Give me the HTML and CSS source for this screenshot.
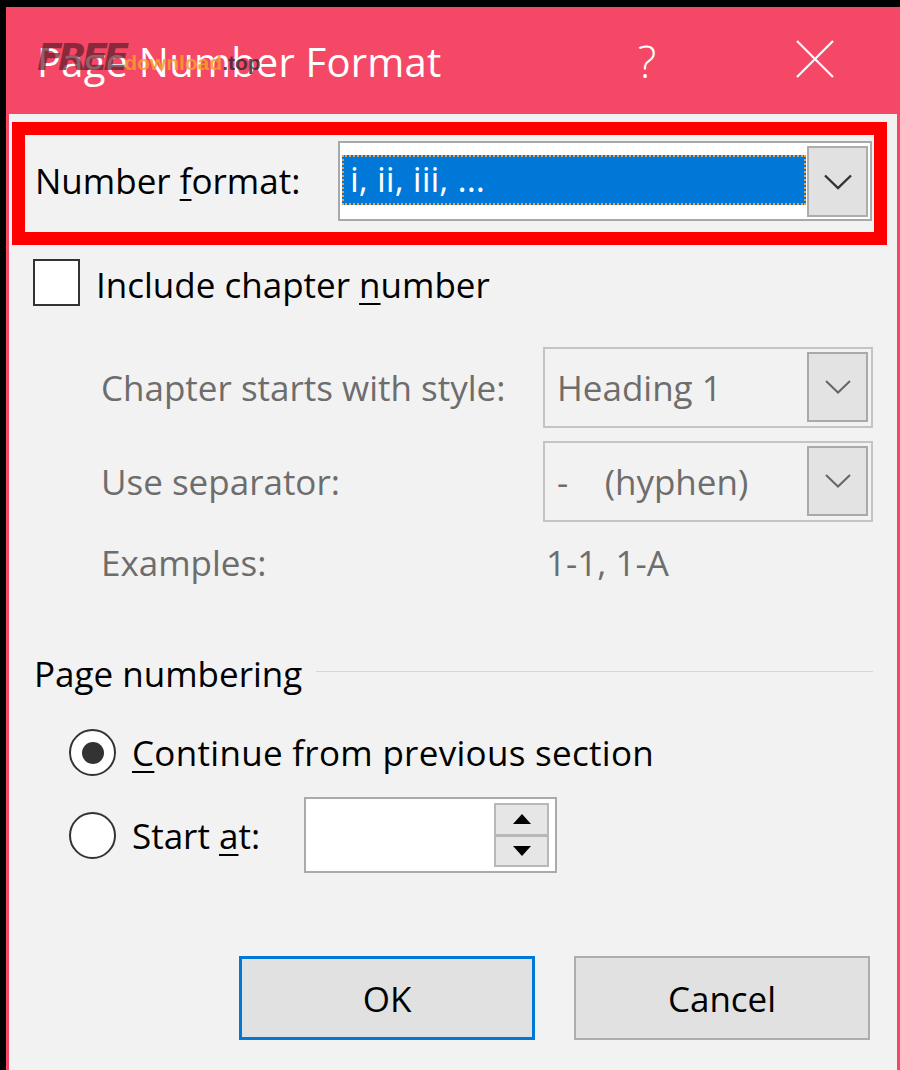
FILE: index.html
```html
<!DOCTYPE html>
<html>
<head>
<meta charset="utf-8">
<link rel="stylesheet" href="styles.css">
</head>
<body>
<div class="window">
  <div class="titlebar">
    <div class="title">Page Number Format</div>
    <div class="watermark"><span class="wm-free">FREE</span><span class="wm-dl">download</span><span class="wm-top">.top</span></div>
    <div class="help">?</div>
    <div class="close">
      <svg width="38" height="38" viewBox="0 0 38 38"><path d="M1 1 L37 37 M37 1 L1 37" stroke="#fff" stroke-width="2.2" fill="none"/></svg>
    </div>
  </div>
  <div class="content">
    <div class="highlight">
      <div class="label fmt-label">Number <u>f</u>ormat:</div>
      <div class="combo">
        <div class="sel">i, ii, iii, ...</div>
        <div class="dd">
          <svg width="28" height="16" viewBox="0 0 28 16"><path d="M1 1.5 L14 14 L27 1.5" stroke="#333" stroke-width="2.4" fill="none"/></svg>
        </div>
      </div>
    </div>

    <div class="check-row">
      <div class="checkbox"></div>
      <div class="label">Include chapter <u>n</u>umber</div>
    </div>

    <div class="dis-row first">
      <div class="label dis dis-label">Chapter starts with style:</div>
      <div class="combo dis-combo">
        <div class="val">Heading 1</div>
        <div class="dd">
          <svg width="28" height="16" viewBox="0 0 28 16"><path d="M2 2 L14 13.5 L26 2" stroke="#666" stroke-width="2" fill="none"/></svg>
        </div>
      </div>
    </div>
    <div class="dis-row">
      <div class="label dis dis-label">Use separator:</div>
      <div class="combo dis-combo">
        <div class="val">-&nbsp;&nbsp;&nbsp;&nbsp;(hyphen)</div>
        <div class="dd">
          <svg width="28" height="16" viewBox="0 0 28 16"><path d="M2 2 L14 13.5 L26 2" stroke="#666" stroke-width="2" fill="none"/></svg>
        </div>
      </div>
    </div>
    <div class="examples">
      <div class="label dis dis-label">Examples:</div>
      <div class="label dis ex-val">1-1, 1-A</div>
    </div>

    <div class="group-head">
      <div class="label">Page numbering</div>
      <div class="rule"></div>
    </div>

    <div class="radio-row first">
      <div class="radio checked"><div class="dot"></div></div>
      <div class="label cont-label"><u>C</u>ontinue from previous section</div>
    </div>
    <div class="radio-row second">
      <div class="radio"></div>
      <div class="label start-label">Start <u>a</u>t:</div>
      <div class="spin">
        <div class="spin-btns">
          <div class="spin-btn"><svg width="18" height="10" viewBox="0 0 18 10"><path d="M9 0 L18 10 L0 10 Z" fill="#000"/></svg></div>
          <div class="spin-btn"><svg width="18" height="10" viewBox="0 0 18 10"><path d="M0 0 L18 0 L9 10 Z" fill="#000"/></svg></div>
        </div>
      </div>
    </div>

    <div class="buttons">
      <div class="btn ok">OK</div>
      <div class="btn">Cancel</div>
    </div>
  </div>
</div>
</body>
</html>
```

FILE: styles.css
```css
html, body {
  margin: 0;
  padding: 0;
  background: #000;
  width: 900px;
  height: 1070px;
  overflow: hidden;
}
body {
  font-family: "Open Sans", "Noto Sans", "DejaVu Sans", sans-serif;
  color: #000;
}
.window {
  margin: 7px 0 0 6px;
  width: 888px;
  height: 1063px;
  border-left: 3px solid #f54866;
  border-right: 3px solid #f54866;
  background: #f2f2f2;
}
.titlebar {
  position: relative;
  height: 107px;
  background: #f54866;
  display: flex;
  align-items: center;
  padding: 0 37px 0 28px;
  color: #fff;
}
.title {
  flex: 1;
  font-size: 40px;
  letter-spacing: 0.2px;
  margin-top: 2px;
}
.watermark {
  position: absolute;
  left: 28px;
  top: 28px;
  display: flex;
  align-items: baseline;
  white-space: nowrap;
}
.wm-free {
  font-family: "DejaVu Sans", sans-serif;
  font-weight: bold;
  font-style: italic;
  font-size: 38px;
  letter-spacing: -5px;
  color: rgba(90, 28, 40, 0.7);
}
.wm-dl {
  font-family: "Liberation Sans", sans-serif;
  font-weight: bold;
  font-size: 21px;
  color: rgba(246, 160, 40, 0.85);
  margin-left: 0px;
}
.wm-top {
  font-family: "Liberation Sans", sans-serif;
  font-weight: bold;
  font-size: 21px;
  color: rgba(60, 40, 50, 0.85);
}
.help {
  width: 60px;
  text-align: center;
  font-size: 44px;
  font-weight: 300;
  margin-right: 93px;
  margin-top: 0px;
}
.close {
  width: 90px;
  display: flex;
  justify-content: center;
  margin-top: -3px;
}
.close svg { display: block; }

.content {
  padding: 8px 10px 0 3px;
}
.label {
  font-size: 35px;
  white-space: nowrap;
}
u { text-underline-offset: 5px; text-decoration-thickness: 2px; }

.highlight {
  border: 13px solid #ff0000;
  height: 91px;
  box-sizing: content-box;
  display: flex;
  align-items: flex-start;
  padding: 6px 2px 0 10px;
}
.fmt-label {
  flex: 0 0 303px;
  line-height: 80px;
}
.combo {
  box-sizing: border-box;
  width: 534px;
  height: 80px;
  border: 2px solid #a8a8a8;
  background: #fff;
  display: flex;
  padding: 3px 2px 2px 2px;
}
.sel {
  flex: 1;
  margin: 9px 1px 0 0;
  height: 50px;
  background: #0078d7;
  outline: 2px dotted #f0a040;
  outline-offset: -2px;
  color: #fff;
  font-size: 35px;
  line-height: 48px;
  padding-left: 8px;
}
.dd {
  box-sizing: border-box;
  width: 61px;
  border: 2px solid #adadad;
  background: #e1e1e1;
  display: flex;
  align-items: center;
  justify-content: center;
}
.dd svg { display: block; }

.check-row {
  margin-top: 14px;
  padding-left: 21px;
  display: flex;
  align-items: center;
  height: 47px;
}
.check-row .label { margin-top: 4px; }
.checkbox {
  box-sizing: border-box;
  flex: 0 0 47px;
  width: 47px;
  height: 47px;
  border: 2px solid #333;
  background: #fff;
  margin-right: 16px;
}

.dis-row {
  display: flex;
  align-items: center;
  padding-left: 89px;
  margin-top: 13px;
}
.dis-row.first { margin-top: 41px; }
.dis { color: #6d6d6d; }
.dis-label { flex: 0 0 442px; }
.dis-combo {
  width: 330px;
  height: 81px;
  border-color: #c4c4c4;
  background: #f2f2f2;
  padding: 3px 3px 4px 2px;
}
.dis-combo .val {
  flex: 1;
  font-size: 35px;
  color: #6d6d6d;
  line-height: 72px;
  padding-left: 10px;
  white-space: pre;
}
.dis-combo .dd {
  border-color: #a9a9a9;
  background: #e3e3e3;
}

.examples {
  display: flex;
  align-items: center;
  padding-left: 89px;
  height: 60px;
  margin-top: 10px;
}
.ex-val { padding-left: 3px; }

.group-head {
  display: flex;
  align-items: center;
  height: 50px;
  margin-top: 58px;
  padding-left: 22px;
  padding-right: 14px;
}
.group-head .label { margin-top: -4px; }
.rule {
  flex: 1;
  height: 1px;
  background: #d7d7d7;
  margin-left: 14px;
  margin-top: -8px;
}

.radio-row {
  display: flex;
  align-items: center;
  padding-left: 57px;
}
.radio-row.first { margin-top: 29px; height: 47px; }
.radio-row.second { margin-top: 21px; height: 76px; }
.cont-label { letter-spacing: 0.3px; }
.radio {
  box-sizing: border-box;
  flex: 0 0 47px;
  width: 47px;
  height: 47px;
  border-radius: 50%;
  border: 2px solid #333;
  background: #fff;
  margin-right: 16px;
  display: flex;
  align-items: center;
  justify-content: center;
}
.dot {
  width: 22px;
  height: 22px;
  border-radius: 50%;
  background: #333;
}
.start-label { flex: 0 0 172px; }
.spin {
  box-sizing: border-box;
  width: 253px;
  height: 76px;
  border: 2px solid #aaaaaa;
  background: #fff;
  display: flex;
  justify-content: flex-end;
  padding: 4px 6px 4px 0;
}
.spin-btns {
  width: 55px;
  display: flex;
  flex-direction: column;
}
.spin-btn {
  box-sizing: border-box;
  flex: 1;
  border: 2px solid #b8b8b8;
  background: #e6e6e6;
  display: flex;
  align-items: center;
  justify-content: center;
}
.spin-btn + .spin-btn { border-top-width: 1px; }
.spin-btn svg { display: block; }

.buttons {
  display: flex;
  justify-content: flex-end;
  gap: 39px;
  margin-top: 83px;
  padding-right: 17px;
}
.btn {
  box-sizing: border-box;
  width: 296px;
  height: 84px;
  border: 2px solid #adadad;
  background: #e1e1e1;
  display: flex;
  align-items: center;
  justify-content: center;
  font-size: 35px;
}
.btn.ok {
  border: 3px solid #0078d7;
}
```
